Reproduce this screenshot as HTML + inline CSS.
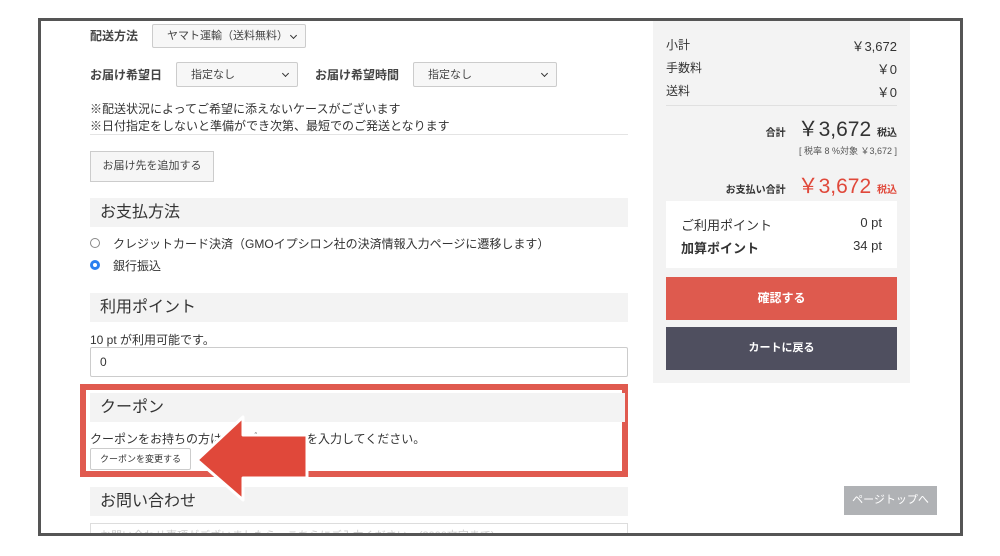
<!DOCTYPE html>
<html><head><meta charset="utf-8">
<style>
*{box-sizing:border-box;margin:0;padding:0}
body{width:1000px;height:556px;background:#fff;position:relative;overflow:hidden;font-family:"Liberation Sans","Noto Sans CJK JP",sans-serif;color:#333}
.a{position:absolute;white-space:nowrap}
.frame{position:absolute;left:38px;top:18px;width:925px;height:519px;border:3px solid #555;overflow:hidden}
.sel{position:absolute;border:1px solid #ccc;border-radius:2px;background:#f7f7f7;font-size:11px;padding-left:14px;line-height:23px;color:#444}
.sel:after{content:"";position:absolute;right:9px;top:8px;width:4px;height:4px;border-right:1.5px solid #333;border-bottom:1.5px solid #333;transform:rotate(45deg)}
.h{position:absolute;left:90px;width:538px;height:29px;background:#f3f3f3;font-size:16px;padding-left:10px;line-height:29px;color:#333}
.t{font-size:12px;color:#333}
.lb{font-size:12px;font-weight:bold;color:#444}
</style></head><body>
<div class="frame"></div>
<div class="a lb" style="left:90px;top:27px">配送方法</div>
<div class="sel" style="left:152px;top:24px;width:154px;height:24px">ヤマト運輸（送料無料）</div>
<div class="a lb" style="left:90px;top:66px">お届け希望日</div>
<div class="sel" style="left:176px;top:62px;width:122px;height:25px;line-height:24px">指定なし</div>
<div class="a lb" style="left:315px;top:66px">お届け希望時間</div>
<div class="sel" style="left:413px;top:62px;width:144px;height:25px;line-height:24px">指定なし</div>
<div class="a t" style="left:90px;top:100px">※配送状況によってご希望に添えないケースがございます</div>
<div class="a t" style="left:90px;top:117px">※日付指定をしないと準備ができ次第、最短でのご発送となります</div>
<div class="a" style="left:90px;top:134px;width:538px;border-top:1px solid #e4e4e4"></div>
<div class="a" style="left:90px;top:151px;width:124px;height:31px;border:1px solid #ccc;background:#f6f6f6;font-size:11px;line-height:29px;text-align:center;color:#444">お届け先を追加する</div>
<div class="h" style="top:198px">お支払方法</div>
<div class="a" style="left:90px;top:238px;width:10px;height:10px;border:1px solid #888;border-radius:50%"></div>
<div class="a t" style="left:113px;top:235px">クレジットカード決済（GMOイプシロン社の決済情報入力ページに遷移します）</div>
<div class="a" style="left:90px;top:260px;width:10px;height:10px;border:3px solid #2a7ff0;border-radius:50%;background:#fff"></div>
<div class="a t" style="left:113px;top:257px">銀行振込</div>
<div class="h" style="top:293px">利用ポイント</div>
<div class="a t" style="left:90px;top:331px">10 pt が利用可能です。</div>
<div class="a" style="left:90px;top:347px;width:538px;height:30px;border:1px solid #ccc;border-radius:2px;font-size:12px;line-height:28px;padding-left:9px">0</div>
<div class="a" style="left:80px;top:384px;width:548px;height:93px;border:6px solid #e05a4f"></div>
<div class="h" style="top:393px;width:535px">クーポン</div>
<div class="a t" style="left:90px;top:430px">クーポンをお持ちの方はクーポンコードを入力してください。</div>
<div class="a" style="left:90px;top:448px;width:101px;height:22px;border:1px solid #ccc;border-radius:2px;background:#fff;font-size:9px;line-height:20px;text-align:center">クーポンを変更する</div>
<div class="h" style="top:487px">お問い合わせ</div>
<div class="a" style="left:90px;top:523px;width:538px;height:30px;border:1px solid #ddd;font-size:11px;color:#ccc;padding:3px 9px">お問い合わせ事項がございましたら、こちらにご入力ください。(3000文字まで)</div>
<svg class="a" style="left:0;top:0" width="1000" height="556"><polygon points="197,460 243,417 243,435 307,435 307,478 243,478 243,500" fill="#e0483a" stroke="#fff" stroke-width="3" stroke-linejoin="round"/></svg>
<div class="a" style="left:0;top:536px;width:1000px;height:20px;background:#fff"></div>
<div class="a" style="left:38px;top:533px;width:925px;height:3px;background:#555"></div>
<div class="a" style="left:653px;top:21px;width:257px;height:362px;background:#f3f3f3"></div>
<div class="a t" style="left:666px;top:36px">小計</div><div class="a t" style="right:103px;top:36px;font-size:13px">￥3,672</div>
<div class="a t" style="left:666px;top:59px">手数料</div><div class="a t" style="right:103px;top:59px;font-size:13px">￥0</div>
<div class="a t" style="left:666px;top:82px">送料</div><div class="a t" style="right:103px;top:82px;font-size:13px">￥0</div>
<div class="a" style="left:666px;top:105px;width:231px;border-top:1px solid #e0e0e0"></div>
<div class="a" style="right:103px;top:113px;font-size:21px;color:#333"><span style="font-size:10px;font-weight:bold;margin-right:12px">合計</span>￥3,672 <span style="font-size:10px;font-weight:bold">税込</span></div>
<div class="a" style="right:103px;top:144px;font-size:9px;color:#555">[ 税率 8 %対象 ￥3,672 ]</div>
<div class="a" style="right:103px;top:170px;font-size:21px;color:#e0483a"><span style="font-size:10px;font-weight:bold;margin-right:12px;color:#333">お支払い合計</span>￥3,672 <span style="font-size:10px;font-weight:bold">税込</span></div>
<div class="a" style="left:666px;top:201px;width:231px;height:67px;background:#fff"></div>
<div class="a t" style="left:681px;top:215px;font-size:13px">ご利用ポイント</div><div class="a t" style="right:118px;top:215px;font-size:13px">0 pt</div>
<div class="a t" style="left:681px;top:238px;font-weight:bold;font-size:13px">加算ポイント</div><div class="a t" style="right:118px;top:238px;font-size:13px">34 pt</div>
<div class="a" style="left:666px;top:277px;width:231px;height:43px;background:#de5a4e;color:#fff;font-size:12px;font-weight:bold;text-align:center;line-height:43px">確認する</div>
<div class="a" style="left:666px;top:327px;width:231px;height:43px;background:#4f4f5f;color:#fff;font-size:11px;font-weight:bold;text-align:center;line-height:43px">カートに戻る</div>
<div class="a" style="left:844px;top:486px;width:93px;height:29px;background:#b0b2b5;color:#fff;font-size:11px;text-align:center;line-height:29px">ページトップへ</div>
</body></html>
